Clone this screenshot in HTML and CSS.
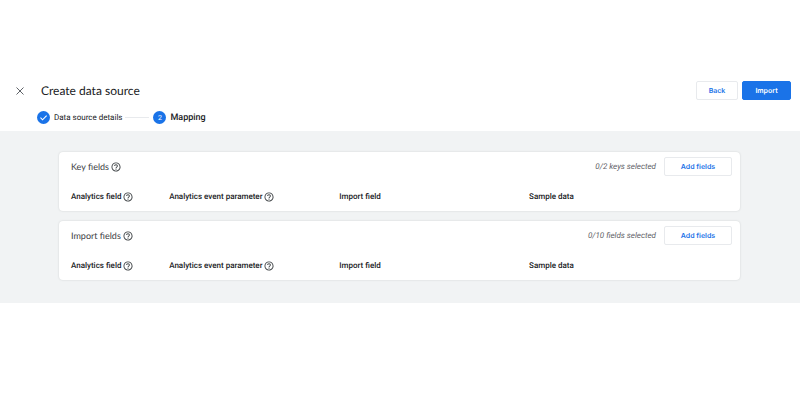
FILE: index.html
```html
<!DOCTYPE html>
<html lang="en">
<head>
    <meta charset="UTF-8">
    <meta name="viewport" content="width=device-width, initial-scale=1.0">
    <title>Create data source</title>
    <link rel="stylesheet" href="styles.css">
</head>
<body>
    <svg class="sprite" aria-hidden="true">
        <symbol id="help" viewBox="1 1 22 22">
            <path d="M11 18h2v-2h-2v2zm1-16C6.48 2 2 6.48 2 12s4.48 10 10 10 10-4.48 10-10S17.52 2 12 2zm0 18c-4.41 0-8-3.59-8-8s3.59-8 8-8 8 3.59 8 8-3.59 8-8 8zm0-14c-2.21 0-4 1.79-4 4h2c0-1.1.9-2 2-2s2 .9 2 2c0 2-3 1.75-3 5h2c0-2.25 3-2.5 3-5 0-2.21-1.79-4-4-4z"/>
        </symbol>
    </svg>

    <header class="header">
        <div class="title-bar">
            <button type="button" class="close" aria-label="Close">
                <svg viewBox="0 0 8 8"><path d="M0.5 0.5l7 7M7.5 0.5l-7 7"/></svg>
            </button>
            <h1>Create data source</h1>
            <button type="button" class="btn btn-back">Back</button>
            <button type="button" class="btn btn-import">Import</button>
        </div>
        <ol class="steps">
            <li class="step">
                <span class="badge">
                    <svg viewBox="0 0 12 12"><path d="M3.200 6.200l1.900 1.900 3.800-3.900"/></svg>
                </span>
                Data source details
            </li>
            <li class="step step-active">
                <span class="badge">2</span>
                Mapping
            </li>
        </ol>
    </header>

    <main class="content">
        <section class="card">
            <div class="card-header">
                <h2>Key fields</h2>
                <svg class="help"><use href="#help"/></svg>
                <span class="count">0/2 keys selected</span>
                <button type="button" class="btn btn-add">Add fields</button>
            </div>
            <table>
                <tr>
                    <th class="col-field">Analytics field <svg class="help"><use href="#help"/></svg></th>
                    <th class="col-param">Analytics event parameter <svg class="help"><use href="#help"/></svg></th>
                    <th class="col-import">Import field</th>
                    <th>Sample data</th>
                </tr>
            </table>
        </section>

        <section class="card">
            <div class="card-header">
                <h2>Import fields</h2>
                <svg class="help"><use href="#help"/></svg>
                <span class="count">0/10 fields selected</span>
                <button type="button" class="btn btn-add">Add fields</button>
            </div>
            <table>
                <tr>
                    <th class="col-field">Analytics field <svg class="help"><use href="#help"/></svg></th>
                    <th class="col-param">Analytics event parameter <svg class="help"><use href="#help"/></svg></th>
                    <th class="col-import">Import field</th>
                    <th>Sample data</th>
                </tr>
            </table>
        </section>
    </main>
</body>
</html>
```

FILE: styles.css
```css
* {
    box-sizing: border-box;
}
body {
    font-family: Roboto, Arial, sans-serif;
    font-size: 8px;
    line-height: 12px;
    text-rendering: geometricPrecision;
    margin: 0;
    color: #202124;
    background: #fff;
}
.sprite {
    display: none;
}
.header {
    padding: 81px 9px 7px 16px;
    border-bottom: 1px solid #f1f3f4;
}
.title-bar {
    display: flex;
    align-items: center;
    gap: 4px;
}
.close {
    width: 8px;
    height: 8px;
    padding: 0;
    border: none;
    background: none;
    cursor: pointer;
}
.close svg {
    display: block;
    fill: none;
    stroke: #5f6368;
    stroke-width: 1;
}
h1 {
    flex: 1;
    margin: 0 0 0 13px;
    font-family: Lato, sans-serif;
    font-size: 12px;
    font-weight: 400;
    line-height: 18px;
}
.btn {
    height: 19px;
    padding: 0;
    border: 1px solid #e8eaed;
    border-radius: 2px;
    font-family: Inter, sans-serif;
    font-size: 7px;
    font-weight: 600;
    text-rendering: inherit;
    color: #1a73e8;
    background: #fff;
    cursor: pointer;
}
.btn-back {
    width: 42px;
}
.btn-import {
    width: 49px;
    border-color: #1a73e8;
    color: #fff;
    background: #1a73e8;
}
.btn-add {
    width: 68px;
}
.steps {
    display: flex;
    align-items: center;
    margin: 11px 0 0;
    padding: 0 0 0 21px;
    list-style: none;
}
.step {
    display: flex;
    align-items: center;
    gap: 4px;
}
.step-active {
    font-size: 9px;
    font-weight: 500;
}
.step-active::before {
    content: "";
    width: 24px;
    margin: 0 0 0 3px;
    border-top: 1px solid #e8eaed;
}
.badge {
    display: flex;
    align-items: center;
    justify-content: center;
    width: 13px;
    height: 13px;
    border-radius: 50%;
    font-size: 7px;
    font-weight: 400;
    color: #fff;
    background: #1a73e8;
}
.badge svg {
    width: 13px;
    height: 13px;
    fill: none;
    stroke: #fff;
    stroke-width: 1;
}
.content {
    padding: 20px 60px 23px 59px;
    background: #f1f3f4;
}
.card {
    padding: 5px 8px 8px 12px;
    border-radius: 4px;
    background: #fff;
    box-shadow: 0 0 2px rgba(60, 64, 67, 0.2);
}
.card + .card {
    margin-top: 10px;
}
.card-header {
    display: flex;
    align-items: center;
}
h2 {
    margin: 0 2px 0 0;
    font-family: Lato, sans-serif;
    font-size: 9px;
    font-weight: 400;
    color: #3c4043;
}
.help {
    width: 10px;
    height: 10px;
    fill: #3c4043;
}
.count {
    margin: 0 8px 0 auto;
    font-style: italic;
    color: #5f6368;
}
table {
    width: 99%;
    margin-top: 15px;
    border-collapse: collapse;
    table-layout: fixed;
}
th {
    height: 12px;
    padding: 0;
    font-weight: 500;
    text-align: left;
    white-space: nowrap;
}
th .help {
    margin-top: 1px;
    vertical-align: top;
}
.col-field {
    width: 15%;
}
.col-param {
    width: 26%;
}
.col-import {
    width: 29%;
}
```
